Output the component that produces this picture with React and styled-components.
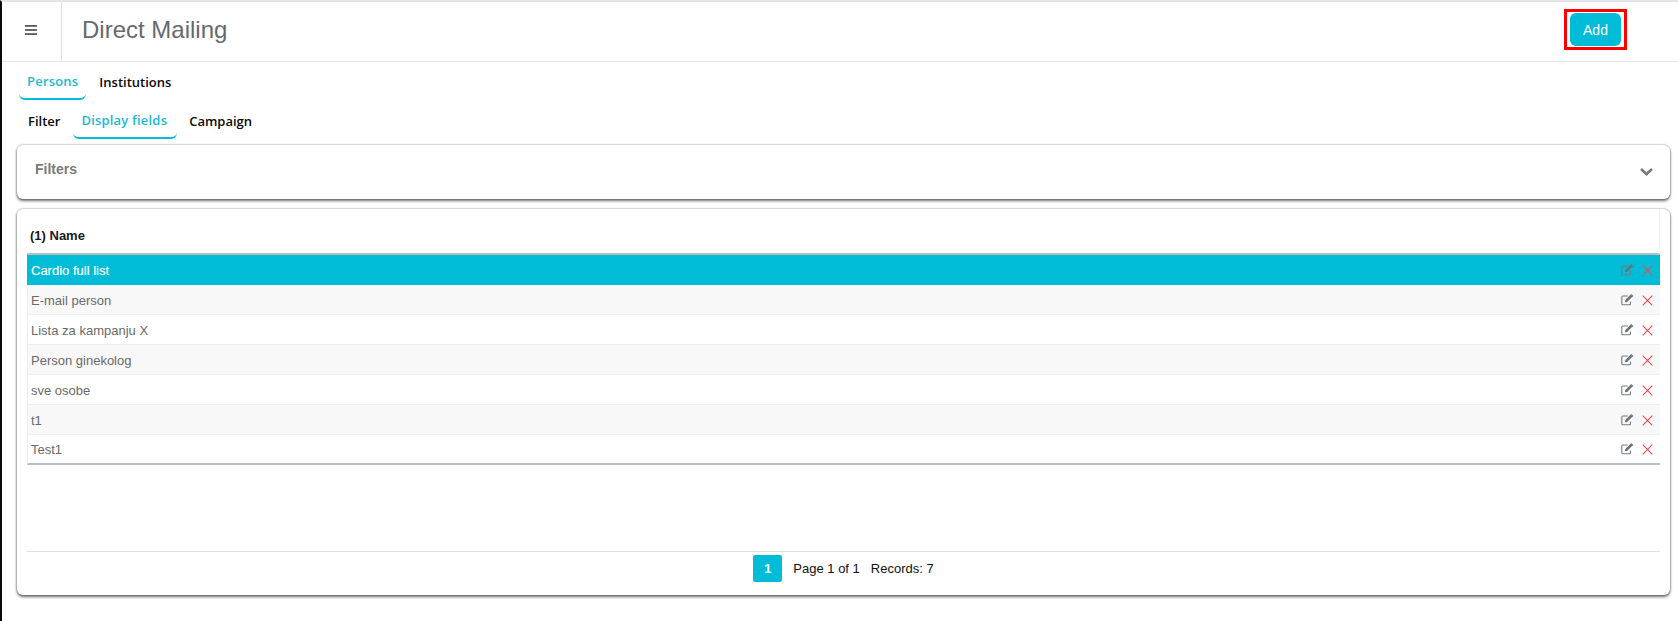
import React from "react";
import styled, { createGlobalStyle } from "styled-components";

const Global = createGlobalStyle`
  html, body { margin: 0; padding: 0; background: #fff; }
  body { font-family: "Liberation Sans", Arial, sans-serif; overflow: hidden; }
  * { box-sizing: border-box; }
`;

const Page = styled.div`
  width: 1678px;
  height: 621px;
  border-left: 2px solid #0c0a0a;
  border-top: 2px solid #e3e3ea;
  background: #fff;
  overflow: hidden;
`;

const Header = styled.header`
  display: flex;
  align-items: center;
  height: 60px;
  border-bottom: 1px solid #e6e6e6;
`;

const MenuCell = styled.div`
  width: 60px;
  height: 59px;
  display: flex;
  align-items: center;
  justify-content: center;
  border-right: 1px solid #dedede;
  color: #5a5a5a;
  padding: 0 2px 3px 0;
`;

const Title = styled.h1`
  flex: 1;
  margin: 0 0 3px 20px;
  font-size: 24px;
  font-weight: 400;
  color: #66696f;
`;

const AddFrame = styled.div`
  margin: 0 51px 4px 0;
  width: 63px;
  height: 41px;
  border: 3px solid #fe0000;
  padding: 1px 3px;
  display: flex;
`;

const AddButton = styled.button`
  width: 100%;
  border: 0;
  border-radius: 6px;
  background: #00bcd6;
  color: #fff;
  font: 14px "Liberation Sans", Arial, sans-serif;
  padding: 0;
`;

const TabRow = styled.nav`
  display: flex;
  height: ${(p) => p.$height}px;
  padding: ${(p) => p.$top}px 0 0 17px;
`;

const Tab = styled.div`
  height: 36px;
  padding: ${(p) => (p.$active ? 0 : 1)}px ${(p) => p.$right}px 0 ${(p) => p.$left}px;
  display: flex;
  align-items: center;
  font-family: "Open Sans", sans-serif;
  font-size: 13px;
  font-weight: 600;
  letter-spacing: ${(p) => (p.$active ? 0.2 : 0)}px;
  color: ${(p) => (p.$active ? "#1cb8d4" : "#0a0a0a")};
  border-bottom: 2px solid ${(p) => (p.$active ? "#00bcd6" : "transparent")};
  border-radius: 0 0 6px 6px;
`;

const Card = styled.section`
  margin: ${(p) => p.$top}px 8px 0 15px;
  height: ${(p) => p.$height}px;
  background: #fff;
  border-radius: 6px;
  box-shadow: 0 2px 3px rgba(0, 0, 0, 0.55), 0 0 2px rgba(0, 0, 0, 0.5);
`;

const FilterBar = styled.div`
  height: 100%;
  padding: 0 17px 6px 18px;
  display: flex;
  align-items: center;
  justify-content: space-between;
  font-size: 14px;
  font-weight: 700;
  color: #7b7b7b;
  svg { margin-top: 6px; }
`;

const TableCard = styled(Card)`
  padding: 0 10px 0 10px;
  display: flex;
  flex-direction: column;
`;

const HeadRow = styled.div`
  height: 46px;
  padding: 9px 0 0 3px;
  display: flex;
  align-items: center;
  font-size: 13px;
  font-weight: 700;
  color: #1a1a1a;
  border-bottom: 2px solid #b6bfc7;
  border-right: 1px solid #f0f0f0;
`;

const Rows = styled.div`
  height: 297px;
`;

const Row = styled.div`
  height: 30px;
  display: flex;
  align-items: center;
  justify-content: space-between;
  padding: ${(p) => (p.$selected || p.$last ? 0 : 1)}px 7px 0 ${(p) => (p.$selected ? 4 : 3)}px;
  font-size: 13px;
  color: ${(p) => (p.$selected ? "#fff" : "#6a6a6a")};
  background: ${(p) => (p.$selected ? "#00bcd6" : p.$odd ? "#f8f8f8" : "#fff")};
  border-bottom: ${(p) => (p.$last ? "2px solid #b6bfc7" : p.$selected ? "0" : "1px solid #efefef")};
  border-left: ${(p) => (p.$selected ? "0" : "1px solid #eeeeee")};
`;

const RowName = styled.span`
  -webkit-text-stroke: ${(p) => (p.$selected ? "0.15px #fff" : "0")};
`;

const RowActions = styled.div`
  display: flex;
  align-items: center;
  gap: 8px;
`;

const Footer = styled.footer`
  flex: 1;
  margin-top: -1px;
  border-top: 1px solid #dedede;
  display: flex;
  justify-content: center;
  align-items: flex-start;
  padding-top: 3px;
  font-size: 13px;
  color: #111;
`;

const PageButton = styled.div`
  width: 29px;
  height: 27px;
  margin-right: 11px;
  background: #00bcd6;
  border-radius: 2px;
  color: #fff;
  font-size: 13px;
  font-weight: 700;
  display: flex;
  align-items: center;
  justify-content: center;
`;

const PagerText = styled.span`
  line-height: 28px;
  margin-right: ${(p) => p.$gap}px;
`;

const CloseIcon = () => (
  <svg width="11" height="11" viewBox="0 0 11 11" fill="none" stroke="#f0494f" strokeWidth="1.1">
    <path d="M.7.7l9.6 9.6M10.3.7L.7 10.3" />
  </svg>
);

const EditIcon = () => (
  <svg width="13" height="12" viewBox="0 0 13 12" fill="none">
    <path d="M9.5 7.5v2.2a1 1 0 0 1-1 1H1.8a1 1 0 0 1-1-1V3a1 1 0 0 1 1-1h5" stroke="#777c82" strokeWidth="1.1" />
    <path d="M3.8 8.3l.5-2.3L9.6.7l1.9 1.9-5.3 5.3z" fill="#6c7177" />
    <path d="M10.3 0l2.1 2.1-.8.8L9.5.8z" fill="#6c7177" />
  </svg>
);

const ChevronIcon = () => (
  <svg width="13" height="8" viewBox="0 0 13 8" fill="none" stroke="#747b82" strokeWidth="2.6">
    <path d="M1 1l5.5 5.2L12 1" />
  </svg>
);

const MenuIcon = () => (
  <svg width="12" height="10" viewBox="0 0 12 10" fill="currentColor">
    <rect y="0" width="12" height="1.8" />
    <rect y="4.1" width="12" height="1.8" />
    <rect y="8.2" width="12" height="1.8" />
  </svg>
);

const rows = ["Cardio full list", "E-mail person", "Lista za kampanju X", "Person ginekolog", "sve osobe", "t1", "Test1"];

export default function App() {
  return (
    <Page>
      <Global />
      <Header>
        <MenuCell><MenuIcon /></MenuCell>
        <Title>Direct Mailing</Title>
        <AddFrame><AddButton>Add</AddButton></AddFrame>
      </Header>
      <TabRow $height={41} $top={2}>
        <Tab $active $left={8} $right={8}>Persons</Tab>
        <Tab $left={13} $right={13}>Institutions</Tab>
      </TabRow>
      <TabRow $height={39} $top={0}>
        <Tab $left={9} $right={13}>Filter</Tab>
        <Tab $active $left={8} $right={10}>Display fields</Tab>
        <Tab $left={12} $right={13}>Campaign</Tab>
      </TabRow>
      <Card $top={3} $height={54}>
        <FilterBar>
          <span>Filters</span>
          <ChevronIcon />
        </FilterBar>
      </Card>
      <TableCard $top={10} $height={386}>
        <HeadRow>(1) Name</HeadRow>
        <Rows>
          {rows.map((name, i) => (
            <Row key={name} $selected={i === 0} $odd={i % 2 === 1} $last={i === rows.length - 1}>
              <RowName $selected={i === 0}>{name}</RowName>
              <RowActions>
                <EditIcon />
                <CloseIcon />
              </RowActions>
            </Row>
          ))}
        </Rows>
        <Footer>
          <PageButton>1</PageButton>
          <PagerText $gap={11}>Page 1 of 1</PagerText>
          <PagerText $gap={0}>Records: 7</PagerText>
        </Footer>
      </TableCard>
    </Page>
  );
}
